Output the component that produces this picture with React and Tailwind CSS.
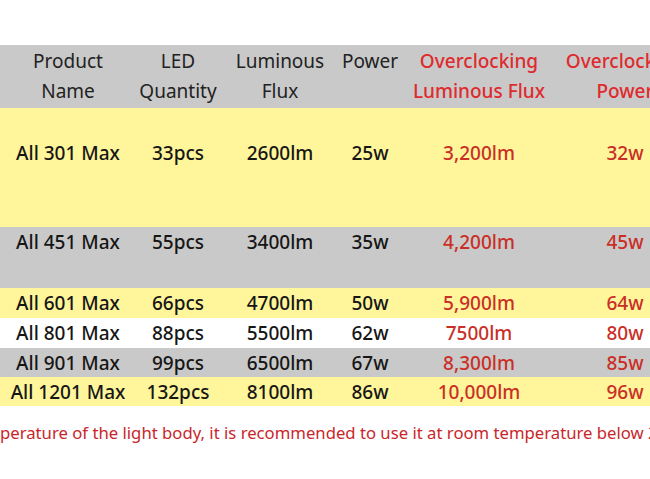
import React from 'react'

const cols = 'grid grid-cols-[136px_84px_120px_60px_158px_134px]'

const rows = [
  { name: 'All 301 Max', qty: '33pcs', flux: '2600lm', power: '25w', ocFlux: '3,200lm', ocPower: '32w', bg: 'bg-[#fff59a]', h: 'h-[119px] pt-[30px]' },
  { name: 'All 451 Max', qty: '55pcs', flux: '3400lm', power: '35w', ocFlux: '4,200lm', ocPower: '45w', bg: 'bg-[#c9c9c9]', h: 'h-[61px]' },
  { name: 'All 601 Max', qty: '66pcs', flux: '4700lm', power: '50w', ocFlux: '5,900lm', ocPower: '64w', bg: 'bg-[#fff59a]', h: 'h-[30px]' },
  { name: 'All 801 Max', qty: '88pcs', flux: '5500lm', power: '62w', ocFlux: '7500lm', ocPower: '80w', bg: 'bg-white', h: 'h-[30px]' },
  { name: 'All 901 Max', qty: '99pcs', flux: '6500lm', power: '67w', ocFlux: '8,300lm', ocPower: '85w', bg: 'bg-[#c9c9c9]', h: 'h-[29px]' },
  { name: 'All 1201 Max', qty: '132pcs', flux: '8100lm', power: '86w', ocFlux: '10,000lm', ocPower: '96w', bg: 'bg-[#fff59a]', h: 'h-[29px]' },
]

function Row({ row }) {
  return (
    <div className={`${cols} ${row.bg} ${row.h} leading-[30px] font-medium text-[#161616]`}>
      <div className="text-center">{row.name}</div>
      <div className="text-center">{row.qty}</div>
      <div className="text-center">{row.flux}</div>
      <div className="text-center">{row.power}</div>
      <div className="text-center text-[#c92f27]">{row.ocFlux}</div>
      <div className="text-center text-[#c92f27]">{row.ocPower}</div>
    </div>
  )
}

export default function App() {
  return (
    <div
      className="w-[650px] h-[479px] overflow-hidden bg-white pt-[45px] text-[19px]"
      style={{ fontFamily: '"Noto Sans", "Liberation Sans", sans-serif' }}
    >
      <div className="w-[692px]">
        <div className={`${cols} bg-[#c9c9c9] h-[63px] pt-[1px] leading-[30px] text-[#222222]`}>
          <div className="text-center">Product<br />Name</div>
          <div className="text-center">LED<br />Quantity</div>
          <div className="text-center">Luminous<br />Flux</div>
          <div className="text-center">Power</div>
          <div className="text-center font-medium text-[#df2a2e]">Overclocking<br />Luminous Flux</div>
          <div className="text-center font-medium text-[#df2a2e]">Overclocking<br />Power</div>
        </div>
        {rows.map(row => <Row key={row.name} row={row} />)}
      </div>

      <div className="mt-[13px] overflow-hidden whitespace-nowrap text-[16.7px] leading-[28px] text-[#c9262b]">
        perature of the light body, it is recommended to use it at room temperature below 25°C
      </div>
    </div>
  )
}
